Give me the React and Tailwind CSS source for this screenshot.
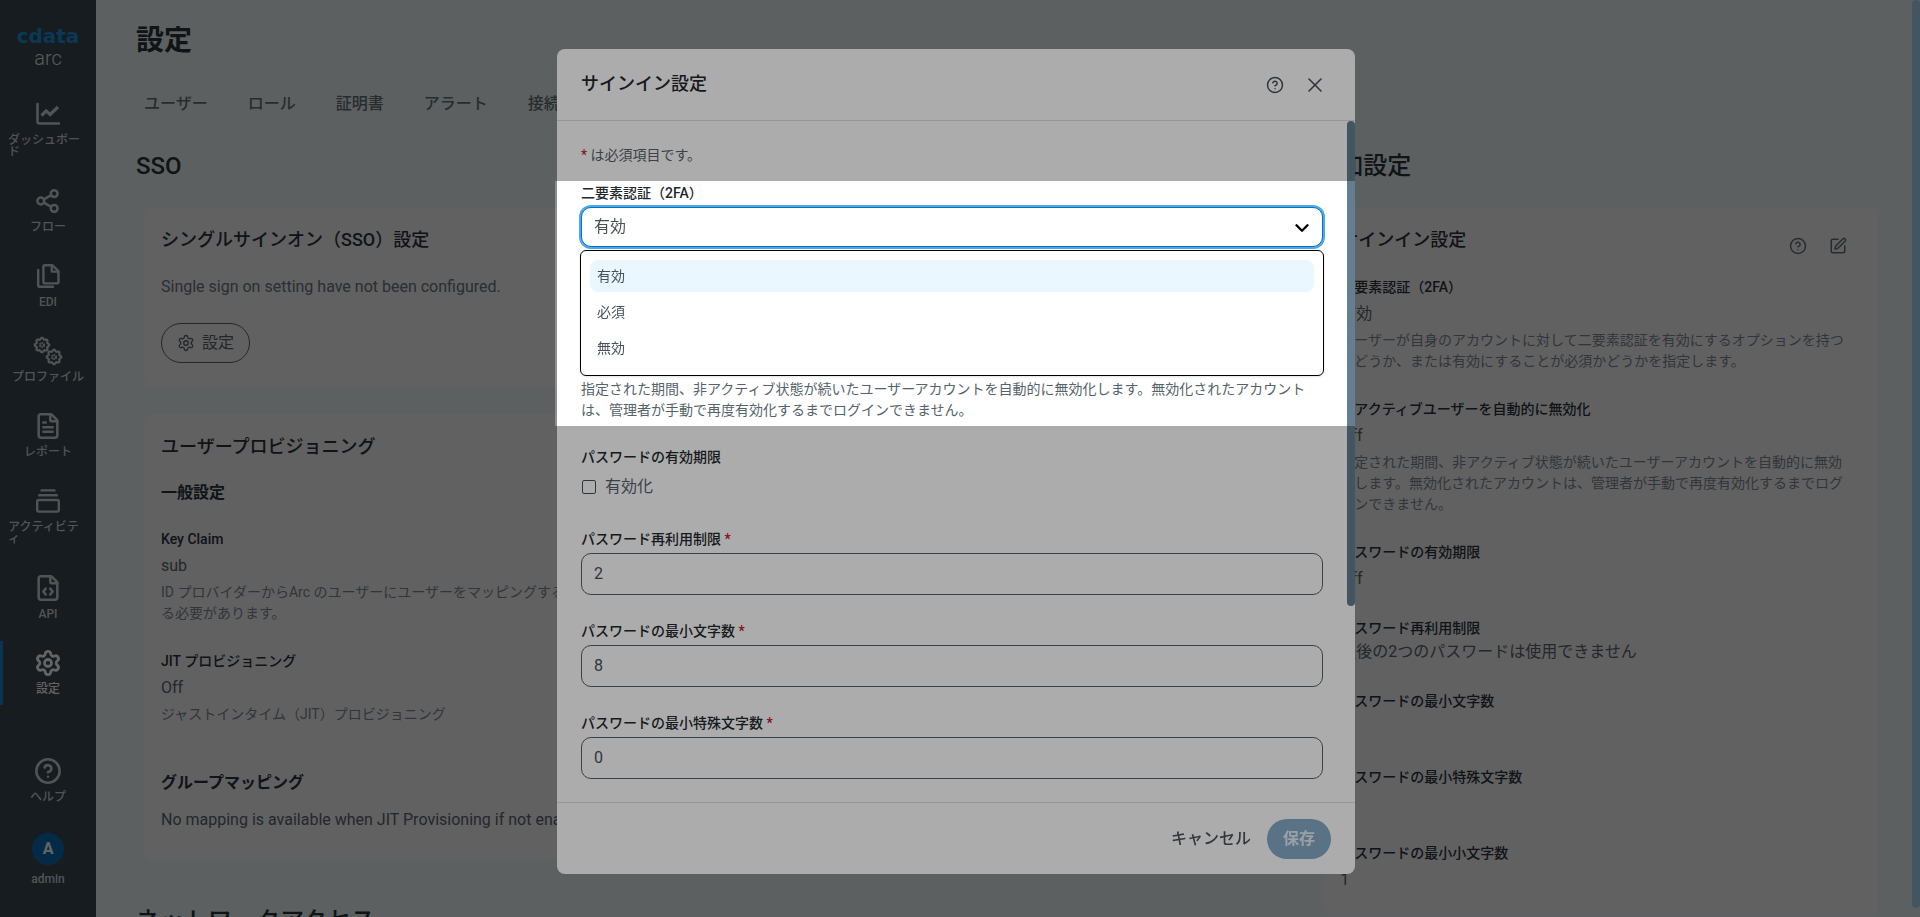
import React from 'react';
import {
  ChevronDown,
  CircleQuestionMark,
  FileCode,
  FileText,
  Settings,
  SquarePen,
  X,
} from 'lucide-react';

/* Icônes de navigation dessinées à la main */
function ChartIcon() {
  return (
    <svg viewBox="0 0 24 24" className="size-6" fill="none" stroke="currentColor" strokeWidth="2.6" strokeLinecap="round" strokeLinejoin="round">
      <path d="M1.5 2v17.5a2 2 0 0 0 2 2H23" />
      <path d="M5.5 13.5l4.6-4.6 4 3.6L22 5" strokeWidth="3.2" strokeLinecap="butt" strokeLinejoin="miter" />
    </svg>
  );
}

function ShareIcon() {
  return (
    <svg viewBox="0 0 24 24" className="size-6" fill="none" stroke="currentColor" strokeWidth="2.5">
      <circle cx="18.2" cy="4.6" r="3.4" />
      <circle cx="18.2" cy="19.4" r="3.4" />
      <circle cx="4.8" cy="12" r="3.4" />
      <path d="M7.8 10.3l7.4-4.1M7.8 13.7l7.4 4.1" />
    </svg>
  );
}

function FilesIcon() {
  return (
    <svg viewBox="0 0 24 24" className="size-6" fill="none" stroke="currentColor" strokeWidth="2.4" strokeLinecap="round" strokeLinejoin="round">
      <path d="M9 1.2h7.2l6.3 6v10.6a1.6 1.6 0 0 1-1.6 1.6H9a1.6 1.6 0 0 1-1.6-1.6v-15A1.6 1.6 0 0 1 9 1.2z" />
      <path d="M15.8 1.6v6h6" />
      <path d="M2.2 6v15.2a1.6 1.6 0 0 0 1.6 1.6H17" />
    </svg>
  );
}

function StackIcon() {
  return (
    <svg viewBox="0 0 24 24" className="size-6" fill="none" stroke="currentColor" strokeWidth="2.4" strokeLinecap="round" strokeLinejoin="round">
      <path d="M5.5 1.4h13M3.2 6.2h17.6" />
      <rect x="1.2" y="11" width="21.6" height="11.6" rx="1.6" />
    </svg>
  );
}

// Contour d'une roue dentée centrée en (cx, cy)
function gearPath(cx, cy, teeth, radius, depth) {
  const points = [];
  for (let i = 0; i < 96; i += 1) {
    const a = (i / 96) * Math.PI * 2;
    const r = radius + depth * Math.cos(teeth * a);
    points.push(`${(cx + r * Math.cos(a)).toFixed(2)} ${(cy + r * Math.sin(a)).toFixed(2)}`);
  }
  return `M${points.join('L')}Z`;
}

function GearsIcon() {
  return (
    <svg viewBox="0 0 30 30" className="-m-[3px] size-[30px]" fill="none" stroke="currentColor" strokeWidth="2.2" strokeLinejoin="round">
      <path d={gearPath(9, 9, 8, 6.5, 0.8)} />
      <circle cx="9" cy="9" r="2" strokeDasharray="1.4 0.6" />
      <path d={gearPath(21, 21, 8, 6.5, 0.8)} />
      <circle cx="21" cy="21" r="2" strokeDasharray="1.4 0.6" />
    </svg>
  );
}

const navItems = [
  { label: 'ダッシュボード', icon: <ChartIcon /> },
  { label: 'フロー', icon: <ShareIcon /> },
  { label: 'EDI', icon: <FilesIcon /> },
  { label: 'プロファイル', icon: <GearsIcon /> },
  { label: 'レポート', icon: <FileText className="-m-0.5 size-7" strokeWidth={2.2} /> },
  { label: 'アクティビティ', icon: <StackIcon /> },
  { label: 'API', icon: <FileCode className="-m-0.5 size-7" strokeWidth={2.2} /> },
  { label: '設定', icon: <Settings className="-m-0.5 size-7" strokeWidth={2.4} />, active: true },
];

const tabs = ['ユーザー', 'ロール', '証明書', 'アラート', '接続'];

const userFields = [
  {
    label: 'Key Claim',
    value: 'sub',
    help: 'ID プロバイダーからArc のユーザーにユーザーをマッピングするために使用される必要があります。',
  },
  { label: 'JIT プロビジョニング', value: 'Off', help: 'ジャストインタイム（JIT）プロビジョニング' },
];

const signInFields = [
  {
    label: '二要素認証（2FA）',
    value: '有効',
    help: 'ユーザーが自身のアカウントに対して二要素認証を有効にするオプションを持つかどうか、または有効にすることが必須かどうかを指定します。',
  },
  {
    label: '非アクティブユーザーを自動的に無効化',
    value: 'Off',
    help: '指定された期間、非アクティブ状態が続いたユーザーアカウントを自動的に無効化します。無効化されたアカウントは、管理者が手動で再度有効化するまでログインできません。',
  },
  { label: 'パスワードの有効期限', value: 'Off' },
  { label: 'パスワード再利用制限', value: '最後の2つのパスワードは使用できません', tight: true },
  { label: 'パスワードの最小文字数', value: '8' },
  { label: 'パスワードの最小特殊文字数', value: '0' },
  { label: 'パスワードの最小小文字数', value: '1' },
];

const passwordInputs = [
  { id: 'reuse', label: 'パスワード再利用制限', value: '2' },
  { id: 'min-length', label: 'パスワードの最小文字数', value: '8' },
  { id: 'min-special', label: 'パスワードの最小特殊文字数', value: '0' },
];

const options = ['有効', '必須', '無効'];

function NavItem({ label, icon, active }) {
  return (
    <a
      href="#"
      className={`flex flex-col items-center gap-2 border-l-3 py-2.5 pr-2 pl-[5px] text-xs leading-3 font-medium ${
        active ? 'border-[#1a86d0] text-white' : 'border-transparent text-[#d0d6da]'
      }`}
    >
      {icon}
      <span className="break-all">{label}</span>
    </a>
  );
}

function Sidebar() {
  return (
    <aside className="flex w-24 shrink-0 flex-col bg-[#3a4951]">
      <div className="flex h-[92px] flex-col items-center pt-6">
        <span className="font-['DejaVu_Sans',sans-serif] text-xl leading-6 font-bold text-[#1d8fdb]">cdata</span>
        <span className="text-xl leading-5 font-light text-[#e3e8ea]">arc</span>
      </div>
      <nav className="flex flex-col gap-[11px]">
        {navItems.map((item) => (
          <NavItem key={item.label} {...item} />
        ))}
      </nav>
      <div className="mt-auto pb-8">
        <NavItem label="ヘルプ" icon={<CircleQuestionMark className="-m-0.5 size-7" strokeWidth={2.2} />} />
        <div className="mt-5 flex flex-col items-center gap-2 text-xs leading-3 font-medium text-[#d0d6da]">
          <span className="flex size-8 items-center justify-center rounded-full bg-[#0a71b8] text-base font-bold text-white">A</span>
          admin
        </div>
      </div>
    </aside>
  );
}

function Card({ title, actions, children }) {
  return (
    <section className="mx-2 rounded-lg border border-[#f3f7f8] bg-[#f8f8fb] pt-5 pr-6 pb-6 pl-4">
      <div className="flex items-start justify-between">
        <h3 className="text-lg leading-6 font-medium text-[#2a353b]">{title}</h3>
        {actions}
      </div>
      {children}
    </section>
  );
}

function Field({ label, value, help, tight }) {
  return (
    <div>
      <p className="text-sm leading-[21px] font-medium text-[#2a353b]">{label}</p>
      <p className={`text-base leading-6 text-[#5a6870] ${tight ? 'mt-px' : 'mt-1'}`}>{value}</p>
      {help && <p className="mt-1 text-sm leading-[21px] text-[#7f8c94]">{help}</p>}
    </div>
  );
}

function SettingsPage() {
  return (
    <main className="min-w-0 flex-1 pt-[21px] pr-[33px] pl-10">
      <h1 className="text-[28px] leading-10 font-bold text-[#2a353b]">設定</h1>
      <nav className="mt-[31px] flex gap-10 pl-2">
        {tabs.map((tab) => (
          <a key={tab} href="#" className="text-base leading-6 font-medium text-[#65737b]">
            {tab}
          </a>
        ))}
      </nav>

      <div className="mt-[34px] grid grid-cols-3 gap-[18px]">
        {/* SSO */}
        <div>
          <h2 className="text-2xl leading-8 font-medium text-[#2a353b]">SSO</h2>
          <div className="mt-[25px] flex flex-col gap-[26px]">
            <Card title="シングルサインオン（SSO）設定">
              <p className="mt-[23px] text-base leading-6 text-[#6b7981]">Single sign on setting have not been configured.</p>
              <button className="mt-6 flex h-10 items-center gap-[7px] rounded-full border border-[#5a6870] px-[15px] text-base text-[#5a6870]">
                <Settings className="size-[18px]" strokeWidth={1.8} />
                設定
              </button>
            </Card>

            <Card title="ユーザープロビジョニング">
              <h4 className="mt-[22px] text-base leading-6 font-bold text-[#2a353b]">一般設定</h4>
              <div className="mt-6 flex flex-col gap-[27px]">
                {userFields.map((field) => (
                  <Field key={field.label} {...field} />
                ))}
              </div>
              <h4 className="mt-[46px] text-base leading-6 font-bold text-[#2a353b]">グループマッピング</h4>
              <p className="mt-[13px] mb-1 text-base leading-6 text-[#5a6870]">No mapping is available when JIT Provisioning if not enabled.</p>
            </Card>
          </div>
          <h2 className="mt-11 text-2xl leading-8 font-medium whitespace-nowrap text-[#2a353b]">ネットワークアクセス</h2>
        </div>

        {/* Autres paramètres */}
        <div className="col-start-3">
          <h2 className="text-2xl leading-8 font-medium text-[#2a353b]">追加設定</h2>
          <div className="mt-[25px]">
            <Card
              title="サインイン設定"
              actions={
                <div className="flex gap-2 pt-0.5 text-[#65737b]">
                  <button aria-label="ヘルプ" className="flex size-8 items-center justify-center">
                    <CircleQuestionMark className="size-[18px]" strokeWidth={2} />
                  </button>
                  <button aria-label="編集" className="flex size-8 items-center justify-center">
                    <SquarePen className="size-[18px]" strokeWidth={2} />
                  </button>
                </div>
              }
            >
              <div className="mt-[15px] flex flex-col gap-[27px]">
                {signInFields.map((field) => (
                  <Field key={field.label} {...field} />
                ))}
              </div>
            </Card>
          </div>
        </div>
      </div>
    </main>
  );
}

function SignInDialog() {
  return (
    <div role="dialog" aria-labelledby="dialog-title" className="relative z-10 flex h-[90vh] w-full max-w-[798px] flex-col rounded-lg bg-white">
      <header className="flex h-[72px] shrink-0 items-center justify-between border-b border-[#dde2e5] pr-5 pl-6">
        <h2 id="dialog-title" className="pb-0.5 text-lg leading-6 font-medium text-[#1f292e]">サインイン設定</h2>
        <div className="flex text-[#46525a]">
          <button aria-label="ヘルプ" className="flex size-10 items-center justify-center">
            <CircleQuestionMark className="size-[18px]" strokeWidth={2} />
          </button>
          <button aria-label="閉じる" className="flex size-10 items-center justify-center">
            <X className="size-6" strokeWidth={1.6} />
          </button>
        </div>
      </header>

      <div className="flex min-h-0 flex-1">
        <form className="min-w-0 flex-1 overflow-hidden px-6 pt-6">
          <p className="text-sm leading-[21px] text-[#55636b]">
            <span className="text-[#c8102e]">*</span> は必須項目です。
          </p>

          <label htmlFor="two-factor" className="mt-[17px] block text-sm leading-[21px] font-medium text-[#1f292e]">
            二要素認証（2FA）
          </label>
          <div className="relative mt-[3px]">
            <select
              id="two-factor"
              defaultValue="有効"
              className="h-10 w-full appearance-none rounded-[10px] border border-[#0a6ebd] bg-white px-3 text-base text-[#46525a] ring-2 ring-[#4ea9ea] outline-none"
            >
              {options.map((option) => (
                <option key={option}>{option}</option>
              ))}
            </select>
            <ChevronDown className="pointer-events-none absolute top-2.5 right-2.5 size-[22px] text-black" strokeWidth={2.6} />
            <ul role="listbox" className="absolute -inset-x-px top-[43px] z-10 flex flex-col gap-1 rounded-md border border-black bg-white px-[9px] pt-[9px] pb-[11px] shadow-sm">
              {options.map((option, index) => (
                <li
                  key={option}
                  role="option"
                  aria-selected={index === 0}
                  className={`rounded-lg px-[7px] text-sm leading-8 text-[#46525a] ${index === 0 ? 'bg-[#ebf7ff]' : ''}`}
                >
                  {option}
                </li>
              ))}
            </ul>
          </div>

          <p className="mt-[132px] pr-1 text-sm leading-[21px] text-[#55636b]">
            指定された期間、非アクティブ状態が続いたユーザーアカウントを自動的に無効化します。無効化されたアカウントは、管理者が手動で再度有効化するまでログインできません。
          </p>

          <p className="mt-[26px] text-sm leading-[21px] font-medium text-[#1f292e]">パスワードの有効期限</p>
          <label className="mt-[7px] flex items-center gap-[9px] pl-px text-base leading-6 text-[#55636b]">
            <input type="checkbox" className="size-[14px] appearance-none rounded-[2px] border border-[#46525a]" />
            有効化
          </label>

          <div className="mt-[30px] flex flex-col gap-[26px]">
            {passwordInputs.map((input) => (
              <div key={input.id}>
                <label htmlFor={input.id} className="block text-sm leading-[21px] font-medium text-[#1f292e]">
                  {input.label} <span className="text-[#c8102e]">*</span>
                </label>
                <input
                  id={input.id}
                  defaultValue={input.value}
                  className="mt-[3px] block h-[42px] w-full rounded-[10px] border border-[#55636b] px-3 pb-0.5 text-base text-[#46525a] outline-none"
                />
              </div>
            ))}
          </div>
        </form>
        <div className="w-2 shrink-0">
          <div className="h-[71.2%] rounded bg-[#647f8f]" />
        </div>
      </div>

      <footer className="flex shrink-0 justify-end border-t border-[#dde2e5] px-6 pt-4 pb-[15px]">
        <button className="h-10 px-4 text-base font-medium text-[#46525a]">キャンセル</button>
        <button className="h-10 rounded-full bg-[#85a9c7] px-4 text-base font-bold text-[#e6eef5]">保存</button>
      </footer>

      {/* Zone mise en avant, le reste est assombri */}
      <div className="pointer-events-none absolute top-[132px] right-0 -left-0.5 z-20 h-[245px] shadow-[0_0_0_9999px_rgba(0,0,0,0.325)]" />
    </div>
  );
}

export default function App() {
  return (
    <div className="relative flex h-screen overflow-hidden bg-[#edf7f7] font-['Roboto','Noto_Sans_CJK_JP',sans-serif]">
      <Sidebar />
      <SettingsPage />

      {/* Fenêtre modale */}
      <div className="fixed inset-0 flex bg-black/42">
        <div className="flex flex-1 items-start justify-center pt-[49px]">
          <SignInDialog />
        </div>
        <div className="w-2 shrink-0">
          <div className="h-[99%] rounded bg-[#647f8f]" />
        </div>
      </div>
    </div>
  );
}
